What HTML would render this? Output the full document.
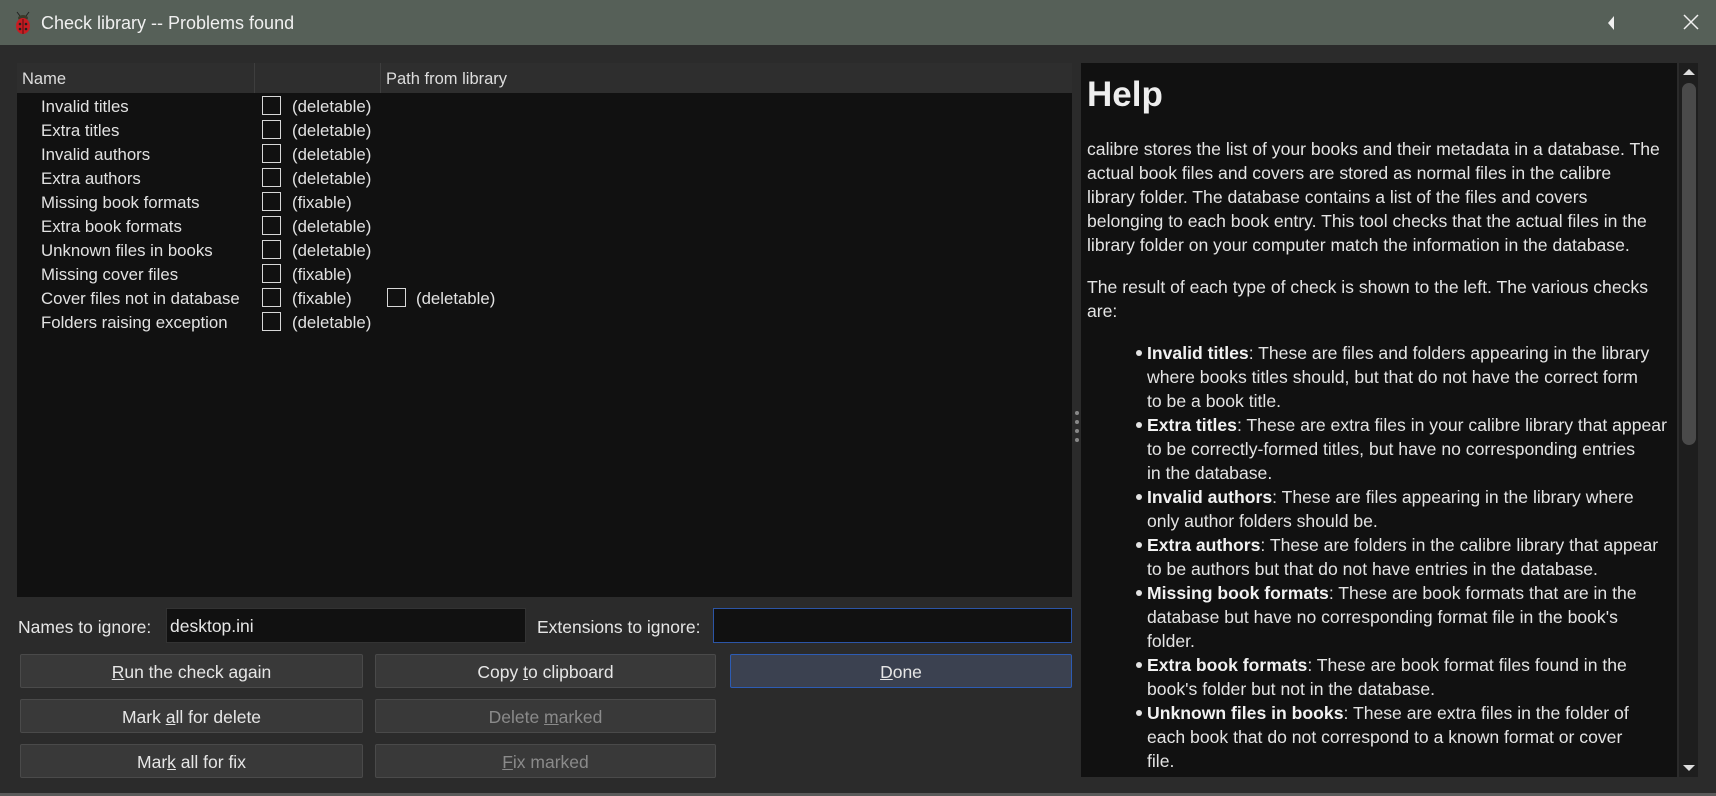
<!DOCTYPE html>
<html><head><meta charset="utf-8"><style>
*{margin:0;padding:0;box-sizing:border-box}
body{width:1716px;height:796px;background:#2b2b2b;font-family:"Liberation Sans",sans-serif;color:#e6e6e6;position:relative;overflow:hidden}
.a{position:absolute;white-space:nowrap}
#tb{left:0;top:0;width:1716px;height:45px;background:#566058}
#tbl{left:17px;top:63px;width:1055px;height:534px;background:#111}
.hd{top:0;height:30px;background:#2e2e2e;border-right:1px solid #3e3e3e;font-size:16.5px;line-height:32px;padding-left:5px;color:#ddd}
.row{font-size:16.8px;line-height:26px;color:#e2e2e2}
.cb{width:19px;height:19px;border:1.5px solid #d8d8d8;background:#111}
.inp{background:#111;border:1px solid #333;font-size:17.5px;line-height:34px;padding-left:3px}
.btn{background:#393939;border:1px solid #4a4a4a;border-radius:2px;font-size:17.5px;text-align:center;line-height:34px;color:#e6e6e6}
.dis{color:#8a8a8a}
#help{left:1081px;top:63px;width:596px;height:714px;background:#111;overflow:hidden}
.p{left:6px;font-size:17.6px;line-height:26px;color:#e4e4e4}
.b{left:66px;font-size:17.6px;line-height:26px;color:#e4e4e4}
.b b{font-weight:bold;color:#f2f2f2}
.dot{left:55px;width:6px;height:6px;border-radius:3px;background:#e4e4e4}
</style></head><body>
<div class="a" id="tb">
 <svg class="a" style="left:13px;top:11px" width="20" height="24" viewBox="0 0 20 24"><line x1="7" y1="5" x2="4" y2="1" stroke="#222"/><line x1="13" y1="5" x2="16" y2="1" stroke="#222"/><ellipse cx="10" cy="7" rx="5" ry="3" fill="#3a3a2a"/><ellipse cx="10" cy="15" rx="7" ry="8" fill="#c81c22"/><line x1="10" y1="8" x2="10" y2="23" stroke="#511"/><circle cx="7" cy="13" r="1.3" fill="#222"/><circle cx="13" cy="13" r="1.3" fill="#222"/><circle cx="7" cy="18" r="1.3" fill="#222"/><circle cx="13" cy="18" r="1.3" fill="#222"/></svg>
 <div class="a" style="left:41px;top:13px;font-size:18px;color:#f0f0f0">Check library -- Problems found</div>
 <svg class="a" style="left:1606px;top:15px" width="10" height="16"><path d="M8 1 L2 8 L8 15 Z" fill="#f0f0f0"/></svg>
 <svg class="a" style="left:1683px;top:14px" width="16" height="16"><path d="M1 1L15 15M15 1L1 15" stroke="#f0f0f0" stroke-width="1.5"/></svg>
</div>
<div class="a" id="tbl">
 <div class="a hd" style="left:0;width:238px">Name</div>
 <div class="a hd" style="left:238px;width:126px"></div>
 <div class="a hd" style="left:364px;width:691px;border-right:none">Path from library</div>
</div>
<div class="a" style="left:0;top:94px">
 <div class="a row" style="left:41px;top:0">Invalid titles</div>
 <div class="a row" style="left:41px;top:24px">Extra titles</div>
 <div class="a row" style="left:41px;top:48px">Invalid authors</div>
 <div class="a row" style="left:41px;top:72px">Extra authors</div>
 <div class="a row" style="left:41px;top:96px">Missing book formats</div>
 <div class="a row" style="left:41px;top:120px">Extra book formats</div>
 <div class="a row" style="left:41px;top:144px">Unknown files in books</div>
 <div class="a row" style="left:41px;top:168px">Missing cover files</div>
 <div class="a row" style="left:41px;top:192px">Cover files not in database</div>
 <div class="a row" style="left:41px;top:216px">Folders raising exception</div>
 <div class="a cb" style="left:262px;top:2px"></div><div class="a row" style="left:292px;top:0">(deletable)</div>
 <div class="a cb" style="left:262px;top:26px"></div><div class="a row" style="left:292px;top:24px">(deletable)</div>
 <div class="a cb" style="left:262px;top:50px"></div><div class="a row" style="left:292px;top:48px">(deletable)</div>
 <div class="a cb" style="left:262px;top:74px"></div><div class="a row" style="left:292px;top:72px">(deletable)</div>
 <div class="a cb" style="left:262px;top:98px"></div><div class="a row" style="left:292px;top:96px">(fixable)</div>
 <div class="a cb" style="left:262px;top:122px"></div><div class="a row" style="left:292px;top:120px">(deletable)</div>
 <div class="a cb" style="left:262px;top:146px"></div><div class="a row" style="left:292px;top:144px">(deletable)</div>
 <div class="a cb" style="left:262px;top:170px"></div><div class="a row" style="left:292px;top:168px">(fixable)</div>
 <div class="a cb" style="left:262px;top:194px"></div><div class="a row" style="left:292px;top:192px">(fixable)</div>
 <div class="a cb" style="left:387px;top:194px"></div><div class="a row" style="left:416px;top:192px">(deletable)</div>
 <div class="a cb" style="left:262px;top:218px"></div><div class="a row" style="left:292px;top:216px">(deletable)</div>
</div>
<div class="a" style="left:18px;top:617px;font-size:17.5px">Names to ignore:</div>
<div class="a inp" style="left:166px;top:608px;width:360px;height:35px">desktop.ini</div>
<div class="a" style="left:537px;top:617px;font-size:17.5px">Extensions to ignore:</div>
<div class="a inp" style="left:713px;top:608px;width:359px;height:35px;border:1px solid #2c55a6"></div>
<div class="a btn" style="left:20px;top:654px;width:343px;height:34px"><u>R</u>un the check again</div>
<div class="a btn" style="left:375px;top:654px;width:341px;height:34px">Copy <u>t</u>o clipboard</div>
<div class="a btn" style="left:730px;top:654px;width:342px;height:34px;background:#3b4150;border-color:#2d5cb4"><u>D</u>one</div>
<div class="a btn" style="left:20px;top:699px;width:343px;height:34px">Mark <u>a</u>ll for delete</div>
<div class="a btn dis" style="left:375px;top:699px;width:341px;height:34px">Delete <u>m</u>arked</div>
<div class="a btn" style="left:20px;top:744px;width:343px;height:34px">Mar<u>k</u> all for fix</div>
<div class="a btn dis" style="left:375px;top:744px;width:341px;height:34px"><u>F</u>ix marked</div>
<div class="a" style="left:1075px;top:411px;width:4px">
 <div style="width:4px;height:4px;border-radius:2px;background:#888;margin-bottom:5px"></div><div style="width:4px;height:4px;border-radius:2px;background:#888;margin-bottom:5px"></div><div style="width:4px;height:4px;border-radius:2px;background:#888;margin-bottom:5px"></div><div style="width:4px;height:4px;border-radius:2px;background:#888"></div>
</div>
<div class="a" id="help">
 <div class="a" style="left:6px;top:12px;font-size:35px;font-weight:bold;color:#eee">Help</div>
 <div class="a p" style="top:73px">calibre stores the list of your books and their metadata in a database. The</div>
 <div class="a p" style="top:97px">actual book files and covers are stored as normal files in the calibre</div>
 <div class="a p" style="top:121px">library folder. The database contains a list of the files and covers</div>
 <div class="a p" style="top:145px">belonging to each book entry. This tool checks that the actual files in the</div>
 <div class="a p" style="top:169px">library folder on your computer match the information in the database.</div>
 <div class="a p" style="top:211px">The result of each type of check is shown to the left. The various checks</div>
 <div class="a p" style="top:235px">are:</div>
 <div class="a dot" style="top:287px"></div><div class="a b" style="top:277px"><b>Invalid titles</b>: These are files and folders appearing in the library</div>
 <div class="a b" style="top:301px">where books titles should, but that do not have the correct form</div>
 <div class="a b" style="top:325px">to be a book title.</div>
 <div class="a dot" style="top:359px"></div><div class="a b" style="top:349px"><b>Extra titles</b>: These are extra files in your calibre library that appear</div>
 <div class="a b" style="top:373px">to be correctly-formed titles, but have no corresponding entries</div>
 <div class="a b" style="top:397px">in the database.</div>
 <div class="a dot" style="top:431px"></div><div class="a b" style="top:421px"><b>Invalid authors</b>: These are files appearing in the library where</div>
 <div class="a b" style="top:445px">only author folders should be.</div>
 <div class="a dot" style="top:479px"></div><div class="a b" style="top:469px"><b>Extra authors</b>: These are folders in the calibre library that appear</div>
 <div class="a b" style="top:493px">to be authors but that do not have entries in the database.</div>
 <div class="a dot" style="top:527px"></div><div class="a b" style="top:517px"><b>Missing book formats</b>: These are book formats that are in the</div>
 <div class="a b" style="top:541px">database but have no corresponding format file in the book's</div>
 <div class="a b" style="top:565px">folder.</div>
 <div class="a dot" style="top:599px"></div><div class="a b" style="top:589px"><b>Extra book formats</b>: These are book format files found in the</div>
 <div class="a b" style="top:613px">book's folder but not in the database.</div>
 <div class="a dot" style="top:647px"></div><div class="a b" style="top:637px"><b>Unknown files in books</b>: These are extra files in the folder of</div>
 <div class="a b" style="top:661px">each book that do not correspond to a known format or cover</div>
 <div class="a b" style="top:685px">file.</div>
 <div class="a dot" style="top:719px"></div><div class="a b" style="top:709px"><b>Missing cover files</b>: These represent books that are marked as having</div>
</div>
<div class="a" style="left:1679px;top:63px;width:19px;height:714px;background:#1e1e1e"></div>
<svg class="a" style="left:1682px;top:67px" width="14" height="10"><path d="M1 8 L7 2 L13 8 Z" fill="#ddd"/></svg>
<div class="a" style="left:1682px;top:83px;width:14px;height:362px;background:#4a4a4a;border-radius:7px"></div>
<svg class="a" style="left:1682px;top:763px" width="14" height="10"><path d="M1 2 L7 8 L13 2 Z" fill="#ddd"/></svg>
<div class="a" style="left:0;top:793px;width:1716px;height:3px;background:#5a5a5a"></div>
</body></html>
